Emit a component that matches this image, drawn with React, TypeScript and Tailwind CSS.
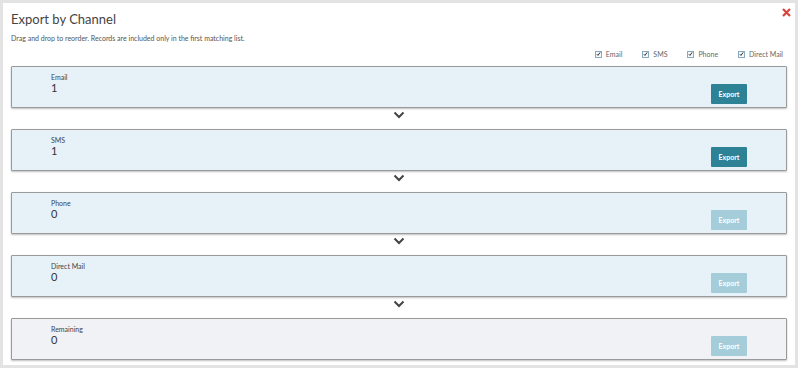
const Check = ({ label }: { label: string }) => (
  <label className="flex items-center gap-[4px] text-[7px] text-[#666]">
    <span className="w-[7px] h-[7px] border border-[#8aa9bd] bg-[#f4f8fb] flex items-center justify-center">
      <svg width="6" height="6" viewBox="0 0 6 6">
        <path d="M1 3.2 L2.4 4.7 L5 1" stroke="#333" strokeWidth="1.2" fill="none" />
      </svg>
    </span>
    {label}
  </label>
);

const Chevron = () => (
  <div className="h-[21px] flex items-start justify-center pt-[3px]">
    <svg width="12" height="8" viewBox="0 0 12 8">
      <path d="M1.5 1.5 L6 6 L10.5 1.5" stroke="#444" strokeWidth="2" fill="none" />
    </svg>
  </div>
);

const channels = [
  { name: "Email", count: 1, active: true, remaining: false },
  { name: "SMS", count: 1, active: true, remaining: false },
  { name: "Phone", count: 0, active: false, remaining: false },
  { name: "Direct Mail", count: 0, active: false, remaining: false },
  { name: "Remaining", count: 0, active: false, remaining: true },
];

export default function App() {
  return (
    <div className="w-[798px] h-[368px] bg-[#e3e3e3] p-[3px] font-['Lato',sans-serif]">
      <div className="relative w-full h-full bg-white px-[8px] pt-[8px] overflow-hidden">
        {/* Close */}
        <svg
          className="absolute top-[5px] right-[4px]"
          width="9"
          height="9"
          viewBox="0 0 9 9"
        >
          <path d="M1 1 L8 8 M8 1 L1 8" stroke="#d9433c" strokeWidth="2.2" />
        </svg>

        <h1 className="text-[13px] leading-[16px] text-[#444]">Export by Channel</h1>
        <p className="mt-[6px] text-[7px] leading-[10px] text-[#555]">
          Drag and drop to reorder. Records are included only in the first matching list.
        </p>

        <div className="flex justify-end gap-[20px] pr-[4px] mt-[6px] h-[10px] items-center">
          <Check label="Email" />
          <Check label="SMS" />
          <Check label="Phone" />
          <Check label="Direct Mail" />
        </div>

        <div className="mt-[7px]">
          {channels.map((c, i) => (
            <div key={c.name}>
              <div
                className={`h-[42px] border border-[#9a9a9a] rounded-[1px] shadow-[0_1px_2px_rgba(0,0,0,0.25)] flex items-end justify-between pl-[39px] pr-[39px] pb-[3px] ${
                  c.remaining ? "bg-[#f0f2f6]" : "bg-[#e6f2f8]"
                }`}
              >
                <div className="self-start pt-[6px]">
                  <div className="text-[7px] leading-[9px] text-[#444]">{c.name}</div>
                  <div className="text-[11px] leading-[12px] text-[#333]">{c.count}</div>
                </div>
                <button
                  className={`w-[36px] h-[20px] text-[7px] font-bold text-white rounded-[1px] ${
                    c.active ? "bg-[#2e8296]" : "bg-[#a5cdd9]"
                  }`}
                >
                  Export
                </button>
              </div>
              {i < channels.length - 1 && <Chevron />}
            </div>
          ))}
        </div>
      </div>
    </div>
  );
}
